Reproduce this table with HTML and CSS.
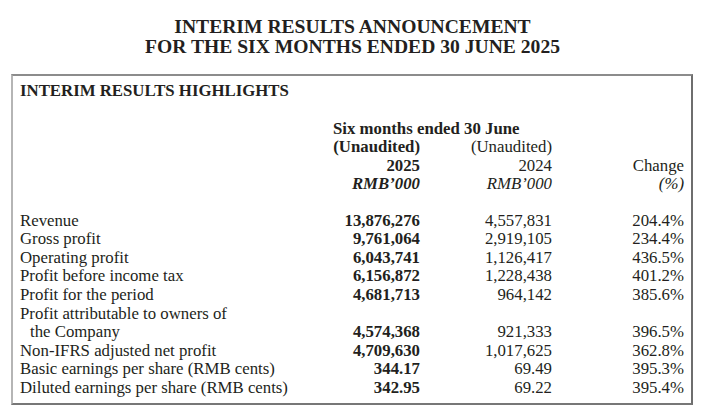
FILE: index.html
```html
<!DOCTYPE html>
<html lang="en">
<head>
    <meta charset="UTF-8">
    <title>Interim Results Announcement</title>
    <link rel="stylesheet" href="styles.css">
</head>
<body>
<div class="page-title">
    <h1>INTERIM RESULTS ANNOUNCEMENT</h1>
    <h1>FOR THE SIX MONTHS ENDED 30 JUNE 2025</h1>
</div>

<div class="highlights-box">
    <h2 class="box-heading">INTERIM RESULTS HIGHLIGHTS</h2>

    <div class="grid header">
        <div class="period bold">Six months ended 30 June</div>
        <div></div>
        <div class="num bold">(Unaudited)</div>
        <div class="num">(Unaudited)</div>
        <div></div>
        <div></div>
        <div class="num bold">2025</div>
        <div class="num">2024</div>
        <div class="num">Change</div>
        <div></div>
        <div class="num bold italic">RMB’000</div>
        <div class="num italic">RMB’000</div>
        <div class="num italic">(%)</div>
    </div>

    <div class="grid rows">
        <div>Revenue</div>
        <div class="num bold">13,876,276</div>
        <div class="num">4,557,831</div>
        <div class="num">204.4%</div>

        <div>Gross profit</div>
        <div class="num bold">9,761,064</div>
        <div class="num">2,919,105</div>
        <div class="num">234.4%</div>

        <div>Operating profit</div>
        <div class="num bold">6,043,741</div>
        <div class="num">1,126,417</div>
        <div class="num">436.5%</div>

        <div>Profit before income tax</div>
        <div class="num bold">6,156,872</div>
        <div class="num">1,228,438</div>
        <div class="num">401.2%</div>

        <div>Profit for the period</div>
        <div class="num bold">4,681,713</div>
        <div class="num">964,142</div>
        <div class="num">385.6%</div>

        <div class="full">Profit attributable to owners of</div>
        <div class="indent">the Company</div>
        <div class="num bold">4,574,368</div>
        <div class="num">921,333</div>
        <div class="num">396.5%</div>

        <div>Non-IFRS adjusted net profit</div>
        <div class="num bold">4,709,630</div>
        <div class="num">1,017,625</div>
        <div class="num">362.8%</div>

        <div>Basic earnings per share (RMB cents)</div>
        <div class="num bold">344.17</div>
        <div class="num">69.49</div>
        <div class="num">395.3%</div>

        <div>Diluted earnings per share (RMB cents)</div>
        <div class="num bold">342.95</div>
        <div class="num">69.22</div>
        <div class="num">395.4%</div>
    </div>
</div>
</body>
</html>
```

FILE: styles.css
```css
* {
    margin: 0;
    padding: 0;
    box-sizing: border-box;
}

body {
    width: 705px;
    height: 420px;
    background-color: #ffffff;
    color: #231f20;
    font-family: "Liberation Serif", "Times New Roman", serif;
    font-size: 16.8px;
}

.page-title {
    padding-top: 17px;
    text-align: center;
}

.page-title h1 {
    font-size: 19.6px;
    line-height: 20px;
    font-weight: bold;
}

.highlights-box {
    margin: 17px 12px 0 11px;
    padding: 6px 7px 5px 7px;
    border-top: 2px solid #8c8c8c;
    border-left: 2px solid #b5b5b5;
    border-right: 2px solid #6e6e6e;
    border-bottom: 2px solid #777777;
}

.box-heading {
    font-size: 16.8px;
    line-height: 18.6px;
    font-weight: bold;
    margin-bottom: 19px;
}

.grid {
    display: grid;
    grid-template-columns: 313px 87px 132px 132px;
    line-height: 18.6px;
}

.header {
    margin-bottom: 17.6px;
}

.period {
    grid-column: 2 / 5;
}

.full {
    grid-column: 1 / 5;
}

.indent {
    padding-left: 10px;
}

.num {
    text-align: right;
    white-space: nowrap;
}

.bold {
    font-weight: bold;
}

.italic {
    font-style: italic;
}
```
